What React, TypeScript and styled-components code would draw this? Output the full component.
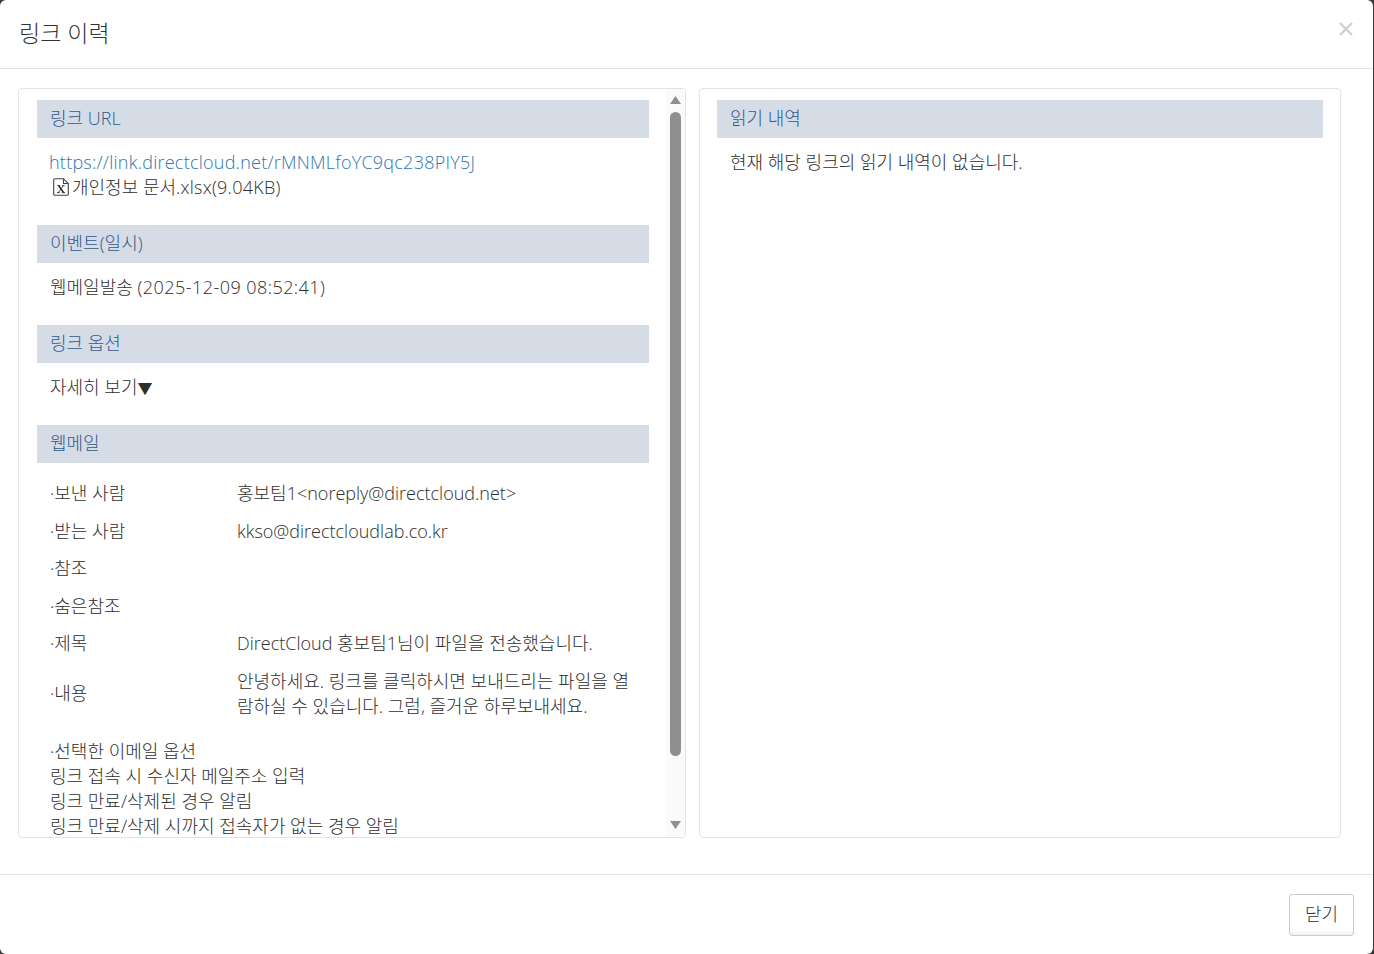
import React from "react";
import styled, { createGlobalStyle } from "styled-components";

const GlobalStyle = createGlobalStyle`
  html, body {
    margin: 0;
    padding: 0;
    height: 100%;
    background: #3a3a3a;
    overflow: hidden;
  }
  body {
    font-family: "Open Sans", "Noto Sans CJK KR", sans-serif;
    font-weight: 300;
    font-size: 18px;
    color: #2e2e2e;
  }
  * { box-sizing: border-box; }
`;

const Modal = styled.div`
  width: 1373px;
  height: 954px;
  background: #fff;
  border-radius: 6px;
  display: flex;
  flex-direction: column;
  overflow: hidden;
`;

const ModalHeader = styled.div`
  height: 69px;
  flex: none;
  border-bottom: 1px solid #e5e5e5;
  display: flex;
  align-items: center;
  justify-content: space-between;
  padding: 0 19px;
`;

const ModalTitle = styled.h4`
  margin: 0 0 2px;
  font-size: 23px;
  font-weight: 300;
  line-height: 32px;
  color: #333;
`;

const CloseIcon = styled.svg`
  width: 14px;
  height: 14px;
  margin: 0 1px 11px 0;
`;

const ModalBody = styled.div`
  flex: 1;
  min-height: 0;
  display: flex;
  gap: 13px;
  padding: 19px 32px 36px 18px;
`;

const Panel = styled.div<{ $width: number }>`
  width: ${(p) => p.$width}px;
  flex: none;
  border: 1px solid #e3e3e3;
  border-radius: 4px;
  display: flex;
  overflow: hidden;
`;

const PanelContent = styled.div<{ $left: number }>`
  flex: 1;
  min-width: 0;
  padding: 11px 17px 0 ${(p) => p.$left}px;
  overflow: hidden;
`;

const ScrollTrack = styled.div`
  width: 19px;
  flex: none;
  background: #fafafa;
  display: flex;
  flex-direction: column;
  align-items: center;
  padding-top: 7px;
`;

const ScrollArrow = styled.svg`
  width: 11px;
  height: 8px;
  flex: none;
  display: block;
`;

const ScrollThumb = styled.div`
  width: 11px;
  height: 644px;
  margin: 8px 0 65px;
  border-radius: 6px;
  background: #8f8f8f;
  flex: none;
`;

const SectionTitle = styled.div`
  height: 38px;
  line-height: 37px;
  padding-left: 13px;
  background: #d6dce6;
  color: #2f5a8c;
`;

const SectionBody = styled.div<{ $bottom: number }>`
  padding: 12px 13px 0;
  line-height: 25px;
  margin-bottom: ${(p) => p.$bottom - 1}px;
`;

const UrlLink = styled.a`
  color: #2f74b0;
  text-decoration: none;
  display: block;
  letter-spacing: 0.24px;
  margin-left: -1px;
`;

const Latin = styled.span<{ $spacing: number }>`
  letter-spacing: ${(p) => p.$spacing}px;
`;

const Caret = styled.span`
  font-size: 15px;
  line-height: 1;
`;

const FileRow = styled.div`
  display: flex;
  align-items: center;
  padding-left: 3px;
`;

const FileIcon = styled.svg`
  width: 16px;
  height: 18px;
  margin-right: 3px;
  margin-top: -2px;
  flex: none;
`;

const MailTable = styled.div`
  display: grid;
  grid-template-columns: 187px 396px;
  align-items: center;
  padding: 12px 13px 0;
  line-height: 25px;
`;

const MailLabel = styled.div`
  padding: 6.25px 0;
`;

const MailValue = styled.div`
  padding: 6.25px 0;
  word-break: break-all;
`;

const MailOptions = styled.div`
  padding: 13.5px 13px 0;
  line-height: 25px;
`;

const ModalFooter = styled.div`
  height: 80px;
  flex: none;
  border-top: 1px solid #e5e5e5;
  display: flex;
  justify-content: flex-end;
  align-items: flex-start;
  padding: 19px 19px 0 0;
`;

const CloseButton = styled.button`
  width: 65px;
  height: 42px;
  border: 1px solid #ccc;
  border-radius: 3px;
  background: linear-gradient(to bottom, #fff 88%, #f0f0f0);
  font: inherit;
  color: #333;
  padding: 0 0 5px;
`;

const mailRows = [
  ["·보낸 사람", "홍보팀1<noreply@directcloud.net>"],
  ["·받는 사람", "kkso@directcloudlab.co.kr"],
  ["·참조", ""],
  ["·숨은참조", ""],
  ["·제목", "DirectCloud 홍보팀1님이 파일을 전송했습니다."],
  [
    "·내용",
    "안녕하세요. 링크를 클릭하시면 보내드리는 파일을 열람하실 수 있습니다. 그럼, 즐거운 하루보내세요.",
  ],
];

const App = () => {
  return (
    <>
      <GlobalStyle />
      <Modal>
        <ModalHeader>
          <ModalTitle>링크 이력</ModalTitle>
          <CloseIcon viewBox="0 0 14 14">
            <path d="M1 1 L13 13 M13 1 L1 13" stroke="#cfcfcf" strokeWidth="2.4" />
          </CloseIcon>
        </ModalHeader>
        <ModalBody>
          <Panel $width={668}>
            <PanelContent $left={18}>
              <SectionTitle>링크 URL</SectionTitle>
              <SectionBody $bottom={26}>
                <UrlLink href="#">https://link.directcloud.net/rMNMLfoYC9qc238PIY5J</UrlLink>
                <FileRow>
                  <FileIcon viewBox="0 0 16 18">
                    <path
                      d="M0.7 1.7 Q0.7 0.7 1.7 0.7 H10.5 L15.3 5.5 V16.3 Q15.3 17.3 14.3 17.3 H1.7 Q0.7 17.3 0.7 16.3 Z M10.5 0.7 V5.5 H15.3"
                      fill="none"
                      stroke="#444"
                      strokeWidth="1.1"
                    />
                    <path d="M5.6 7.6 L10.6 14.6" stroke="#222" strokeWidth="1.6" />
                    <path
                      d="M10.4 7.6 L5.4 14.6 M4.2 7.6 H7.2 M9 7.6 H11.6 M4 14.6 H6.8 M8.8 14.6 H12"
                      fill="none"
                      stroke="#333"
                      strokeWidth="0.9"
                    />
                  </FileIcon>
                  <span>
                    개인정보 문서<Latin $spacing={0.25}>.xlsx(9.04KB)</Latin>
                  </span>
                </FileRow>
              </SectionBody>
              <SectionTitle>이벤트(일시)</SectionTitle>
              <SectionBody $bottom={26}>
                웹메일발송 <Latin $spacing={0.45}>(2025-12-09 08:52:41)</Latin>
              </SectionBody>
              <SectionTitle>링크 옵션</SectionTitle>
              <SectionBody $bottom={26}>
                자세히 보기<Caret>▼</Caret>
              </SectionBody>
              <SectionTitle>웹메일</SectionTitle>
              <MailTable>
                {mailRows.map(([label, value]) => (
                  <React.Fragment key={label}>
                    <MailLabel>{label}</MailLabel>
                    <MailValue>{value}</MailValue>
                  </React.Fragment>
                ))}
              </MailTable>
              <MailOptions>
                ·선택한 이메일 옵션
                <br />
                링크 접속 시 수신자 메일주소 입력
                <br />
                링크 만료/삭제된 경우 알림
                <br />
                링크 만료/삭제 시까지 접속자가 없는 경우 알림
              </MailOptions>
            </PanelContent>
            <ScrollTrack>
              <ScrollArrow viewBox="0 0 11 8">
                <path d="M5.5 0 L11 8 H0 Z" fill="#8f8f8f" />
              </ScrollArrow>
              <ScrollThumb />
              <ScrollArrow viewBox="0 0 11 8">
                <path d="M0 0 H11 L5.5 8 Z" fill="#8f8f8f" />
              </ScrollArrow>
            </ScrollTrack>
          </Panel>
          <Panel $width={642}>
            <PanelContent $left={17}>
              <SectionTitle>읽기 내역</SectionTitle>
              <SectionBody $bottom={1}>현재 해당 링크의 읽기 내역이 없습니다.</SectionBody>
            </PanelContent>
          </Panel>
        </ModalBody>
        <ModalFooter>
          <CloseButton>닫기</CloseButton>
        </ModalFooter>
      </Modal>
    </>
  );
};

export default App;
